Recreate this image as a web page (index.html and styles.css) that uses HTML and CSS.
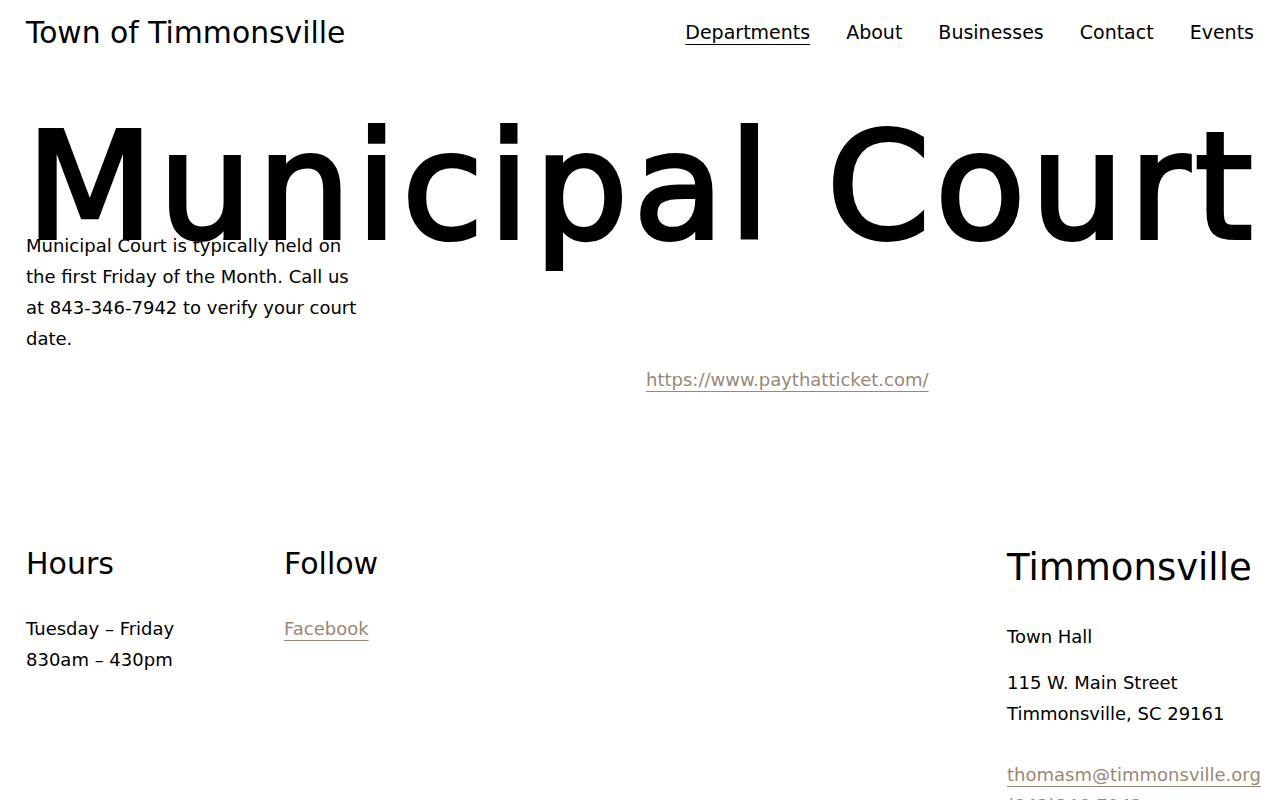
FILE: index.html
```html
<!DOCTYPE html>
<html lang="en">
<head>
<meta charset="utf-8">
<title>Municipal Court – Town of Timmonsville</title>
<link rel="stylesheet" href="styles.css">
</head>
<body>
<header class="site-header">
  <a class="logo" href="#">Town of Timmonsville</a>
  <nav class="nav">
    <a class="nav-link active" href="#">Departments</a>
    <a class="nav-link" href="#">About</a>
    <a class="nav-link" href="#">Businesses</a>
    <a class="nav-link" href="#">Contact</a>
    <a class="nav-link" href="#">Events</a>
  </nav>
</header>
<main class="content">
  <h1 class="title">Municipal Court</h1>
  <div class="intro">
    <p class="intro-text">Municipal Court is typically held on the first Friday of the Month. Call us at 843-346-7942 to verify your court date.</p>
    <p class="intro-link"><a class="link" href="#">https://www.paythatticket.com/</a></p>
  </div>
</main>
<footer class="footer">
  <section class="footer-col hours">
    <h2 class="footer-title">Hours</h2>
    <p class="footer-text">Tuesday – Friday<br>830am – 430pm</p>
  </section>
  <section class="footer-col follow">
    <h2 class="footer-title">Follow</h2>
    <p class="footer-text"><a class="link" href="#">Facebook</a></p>
  </section>
  <section class="footer-col town">
    <h2 class="town-title">Timmonsville</h2>
    <p class="town-text">Town Hall</p>
    <p class="town-text addr">115 W. Main Street<br>Timmonsville, SC 29161</p>
    <p class="town-text contact"><a class="link" href="#">thomasm@timmonsville.org</a><br><a class="link" href="#">(843)346-7942</a></p>
  </section>
</footer>
</body>
</html>
```

FILE: styles.css
```css
html, body {
  margin: 0;
  padding: 0;
  background: #ffffff;
}
body {
  font-family: "DejaVu Sans", sans-serif;
  color: #000;
  overflow-x: hidden;
}
a { color: inherit; text-decoration: none; }

.site-header {
  display: flex;
  justify-content: space-between;
  align-items: center;
  padding: 15px 26px 0 26px;
}
.logo {
  font-size: 29.8px;
  line-height: 35px;
}
.nav {
  display: flex;
  gap: 36px;
}
.nav-link {
  font-size: 19px;
  line-height: 35px;
}
.nav-link.active {
  text-decoration: underline;
  text-decoration-thickness: 1px;
  text-underline-offset: 5px;
}

.content {
  padding: 0 26px;
}
.title {
  margin: 95px 0 0 0;
  font-size: 148px;
  font-weight: normal;
  line-height: 85px;
  letter-spacing: 4.9px;
  white-space: nowrap;
  -webkit-text-stroke: 4px #000;
}
.intro {
  display: grid;
  grid-template-columns: 620px 1fr;
}
.intro-text {
  grid-column: 1;
  grid-row: 1;
  margin: 0;
  width: 345px;
  font-size: 18px;
  line-height: 31px;
}
.intro-link {
  grid-column: 2;
  grid-row: 2;
  margin: 10px 0 0 0;
  font-size: 18px;
  line-height: 31px;
}
.link {
  color: #9c8775;
  text-decoration: underline;
  text-decoration-thickness: 1px;
  text-underline-offset: 5px;
}

.footer {
  display: flex;
  padding: 151px 26px 0 26px;
}
.footer-col.hours { width: 258px; }
.footer-col.follow { flex: 1; }
.footer-col.town { width: 247px; }
.footer-title {
  margin: 0;
  font-size: 30px;
  font-weight: normal;
  line-height: 36px;
}
.footer-text {
  margin: 31px 0 0 0;
  font-size: 18px;
  line-height: 31px;
}
.town-title {
  margin: 0;
  font-size: 37px;
  font-weight: normal;
  line-height: 44px;
}
.town-text {
  margin: 31px 0 0 0;
  font-size: 18px;
  line-height: 31px;
  white-space: nowrap;
}
.town-text.addr { margin-top: 15px; }
.town-text.contact { margin-top: 30px; }
```
